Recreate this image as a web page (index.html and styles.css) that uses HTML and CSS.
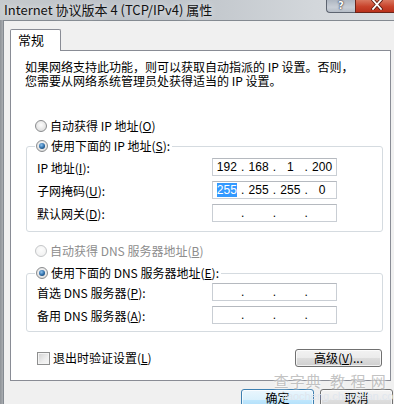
FILE: index.html
```html
<!DOCTYPE html>
<html lang="zh-CN">
<head>
    <meta charset="UTF-8">
    <title>Internet 协议版本 4 (TCP/IPv4) 属性</title>
    <link rel="stylesheet" href="styles.css">
</head>
<body>
    <div class="window">
        <div class="titlebar">
            <span class="title">Internet 协议版本 4 (TCP/IPv4) 属性</span>
            <div class="caption-buttons">
                <span class="cap-btn help">?</span>
                <span class="cap-btn close">
                    <svg width="12" height="10" viewBox="0 0 12 10">
                        <path d="M2 0 L10 9 M10 0 L2 9" stroke="#5a1a10" stroke-width="3.4" stroke-linecap="square"/>
                        <path d="M2 0 L10 9 M10 0 L2 9" stroke="#fff" stroke-width="1.8" stroke-linecap="square"/>
                    </svg>
                </span>
            </div>
        </div>

        <div class="client">
            <div class="tabs">
                <span class="tab active">常规</span>
            </div>

            <div class="panel">
                <p class="intro">如果网络支持此功能，则可以获取自动指派的 IP 设置。否则，<br>您需要从网络系统管理员处获得适当的 IP 设置。</p>

                <label class="option first"><input type="radio" name="ip"><span>自动获得 IP 地址(<u>O</u>)</span></label>

                <fieldset class="group ip-group">
                    <legend><label class="option"><input type="radio" name="ip" checked><span>使用下面的 IP 地址(<u>S</u>):</span></label></legend>
                    <div class="field-row">
                        <span class="field-label">IP 地址(<u>I</u>):</span>
                        <div class="ip-box"><span>192</span><i>.</i><span>168</span><i>.</i><span>1</span><i>.</i><span>200</span></div>
                    </div>
                    <div class="field-row">
                        <span class="field-label">子网掩码(<u>U</u>):</span>
                        <div class="ip-box"><span><em class="selected">255</em></span><i>.</i><span>255</span><i>.</i><span>255</span><i>.</i><span>0</span></div>
                    </div>
                    <div class="field-row">
                        <span class="field-label">默认网关(<u>D</u>):</span>
                        <div class="ip-box"><span></span><i>.</i><span></span><i>.</i><span></span><i>.</i><span></span></div>
                    </div>
                </fieldset>

                <label class="option disabled dns-auto"><input type="radio" name="dns" disabled><span>自动获得 DNS 服务器地址(<u>B</u>)</span></label>

                <fieldset class="group dns-group">
                    <legend><label class="option"><input type="radio" name="dns" checked><span>使用下面的 DNS 服务器地址(<u>E</u>):</span></label></legend>
                    <div class="field-row">
                        <span class="field-label">首选 DNS 服务器(<u>P</u>):</span>
                        <div class="ip-box"><span></span><i>.</i><span></span><i>.</i><span></span><i>.</i><span></span></div>
                    </div>
                    <div class="field-row">
                        <span class="field-label">备用 DNS 服务器(<u>A</u>):</span>
                        <div class="ip-box"><span></span><i>.</i><span></span><i>.</i><span></span><i>.</i><span></span></div>
                    </div>
                </fieldset>

                <div class="bottom-row">
                    <label class="check"><input type="checkbox"><span>退出时验证设置(<u>L</u>)</span></label>
                    <button class="btn advanced">高级(<u>V</u>)...</button>
                </div>
            </div>

            <div class="dialog-buttons">
                <button class="btn default">确定</button>
                <button class="btn">取消</button>
            </div>
        </div>

        <!-- site watermark over the corner -->
        <div class="watermark">
            <span class="wm-title">查字典 <b>教 程 网</b></span>
            <span class="wm-url">jiaocheng.chazidian.com</span>
        </div>
    </div>
</body>
</html>
```

FILE: styles.css
```css
* {
    box-sizing: border-box;
}

body {
    margin: 0;
    width: 394px;
    height: 404px;
    overflow: hidden;
    font-family: "Noto Sans CJK SC", sans-serif;
    font-size: 12px;
    color: #000;
    background: #f0f0f0;
}

.window {
    position: relative;
    height: 404px;
    padding-left: 3px;
    background: linear-gradient(to right, #8f9398, #a9adb1 3px, #c9cdd1 3px);
}

/* title bar */
.titlebar {
    height: 20px;
    display: flex;
    justify-content: space-between;
    align-items: flex-start;
    margin-left: -3px;
    background: linear-gradient(to right, #c6cacd, #bcc2c8 30%, #c4c9ce 55%, #d3d7db 80%, #dadde0);
}
.title {
    padding: 1px 0 0 4px;
    font-size: 13px;
    line-height: 17px;
    color: #111;
    text-shadow: 0 0 6px rgba(255, 255, 255, 0.8);
}
.caption-buttons {
    display: flex;
    margin-right: -4px;
}
.cap-btn {
    height: 13px;
    display: flex;
    justify-content: center;
    align-items: flex-start;
    border: 1px solid #5d6470;
    border-top: none;
}
.help {
    width: 29px;
    border-radius: 0 0 0 4px;
    border-right: none;
    background: linear-gradient(#aeb6c1, #c8ced6 60%, #b6bdc7);
    color: #fff;
    font-family: "DejaVu Sans", sans-serif;
    font-weight: bold;
    font-size: 10px;
    line-height: 11px;
    text-shadow: 0 0 2px #223, 0 0 1px #223;
}
.close {
    width: 43px;
    background: linear-gradient(#d9775f, #c8432b 55%, #b9301b);
    border-color: #6b2418;
}

/* client area */
.client {
    height: 384px;
    border-top: 1px solid #848a91;
    border-left: 1px solid #848a91;
    background: #f0f0f0;
}
.tabs {
    display: flex;
    padding: 8px 0 0 6px;
}
.tab {
    width: 51px;
    height: 22px;
    margin-bottom: -1px;
    padding: 1px 0 0 7px;
    border: 1px solid #898c95;
    border-bottom: none;
    border-radius: 2px 2px 0 0;
    background: #fff;
    font-size: 13px;
    line-height: 18px;
    position: relative;
}

.panel {
    width: 381px;
    height: 331px;
    margin-left: 6px;
    padding: 9px 7px 0 14px;
    border: 1px solid #898c95;
    background: #fff;
    display: flex;
    flex-direction: column;
}
.intro {
    margin: 0;
    line-height: 14px;
    white-space: nowrap;
}

/* radio / checkbox rows */
.option, .check {
    display: flex;
    align-items: center;
    height: 16px;
    line-height: 16px;
    white-space: nowrap;
}
.option.first {
    margin: 30px 0 0 10px;
}
.option.dns-auto {
    margin: 11px 0 0 10px;
}
.option.disabled {
    color: #8d8d8d;
}
input[type="radio"] {
    appearance: none;
    width: 12px;
    height: 12px;
    margin: 0 3px 0 0;
    border: 1px solid #8a8c8e;
    border-radius: 50%;
    background: radial-gradient(circle at 50% 40%, #fdfdfd, #e1e1e1 70%, #d2d2d2);
    display: inline-grid;
    place-content: center;
}
input[type="radio"]:checked::before {
    content: "";
    width: 6px;
    height: 6px;
    border-radius: 50%;
    background: radial-gradient(circle at 40% 35%, #8fc3ee, #2a6aa6 55%, #0e2b49);
}
input[type="radio"]:disabled {
    border-color: #c4c6c8;
    background: radial-gradient(circle at 50% 40%, #fdfdfd, #eeeeee);
}

/* group boxes */
.group {
    margin: 0 0 0 1px;
    width: 357px;
    border: 1px solid #d5dbe0;
    border-radius: 3px;
    min-width: 0;
    display: flex;
    flex-direction: column;
    gap: 5px;
}
.group legend {
    padding: 0 2px 0 1px;
}
.ip-group {
    margin-top: 4px;
    padding: 4px 0 9px 8px;
}
.dns-group {
    margin-top: 6px;
    padding: 2px 0 7px 8px;
}

.field-row {
    display: flex;
    align-items: center;
    height: 18px;
    padding-left: 2px;
}
.field-label {
    width: 175px;
    white-space: nowrap;
}
.ip-box {
    width: 125px;
    height: 18px;
    border: 1px solid #c9ced4;
    border-top-color: #b5b9bf;
    display: grid;
    grid-template-columns: 1fr 4px 1fr 4px 1fr 4px 1fr;
    align-items: center;
    font-family: "Liberation Sans", sans-serif;
    font-size: 12px;
    line-height: 14px;
}
.ip-box span {
    text-align: center;
}
.ip-box i {
    font-style: normal;
    text-align: center;
}
.selected {
    font-style: normal;
    background: #3399ff;
    color: #fff;
}

/* bottom of the panel */
.bottom-row {
    margin-top: 17px;
    display: flex;
    justify-content: space-between;
    align-items: center;
    padding-left: 12px;
    padding-right: 1px;
}
.check input {
    appearance: none;
    width: 13px;
    height: 13px;
    margin: 0 3px 0 0;
    border: 1px solid #8e8f8f;
    background: linear-gradient(135deg, #d0d0d0, #eeeeee 60%, #f6f6f6);
    box-shadow: inset 0 0 0 1px #f4f4f4;
}

.btn {
    font-family: "Noto Sans CJK SC", sans-serif;
    font-size: 12px;
    color: #000;
    border: 1px solid #707070;
    border-radius: 3px;
    background: linear-gradient(#f2f2f2, #ebebeb 50%, #dddddd 50%, #cfcfcf);
    box-shadow: inset 0 0 0 1px rgba(255, 255, 255, 0.7);
    padding: 0;
}
.advanced {
    width: 87px;
    height: 18px;
    line-height: 14px;
}

.dialog-buttons {
    display: flex;
    justify-content: flex-end;
    align-items: flex-start;
    gap: 6px;
    margin-top: 8px;
    padding-right: 1px;
}
.dialog-buttons .btn {
    width: 73px;
    height: 23px;
    padding-top: 2px;
    line-height: 12px;
    display: flex;
    justify-content: center;
    align-items: flex-start;
}
.btn.default {
    border-color: #3c7fb1;
    background: linear-gradient(#eaf6fd, #d9f0fc 50%, #bee6fd 50%, #a7d9f5);
}

/* watermark */
.watermark {
    position: absolute;
    left: 258px;
    top: 372px;
    display: flex;
    flex-direction: column;
    align-items: center;
    color: #b9b9b9;
    pointer-events: none;
}
.wm-title {
    font-size: 15px;
    line-height: 18px;
    letter-spacing: 1px;
    text-shadow: 0 0 3px #fff, 0 0 3px #fff;
    opacity: 0.85;
}
.wm-title b {
    font-weight: normal;
    padding-left: 4px;
}
.wm-url {
    margin-left: 24px;
    font-family: "Liberation Sans", sans-serif;
    font-size: 11px;
    line-height: 12px;
    color: #dfe6ee;
}
```
